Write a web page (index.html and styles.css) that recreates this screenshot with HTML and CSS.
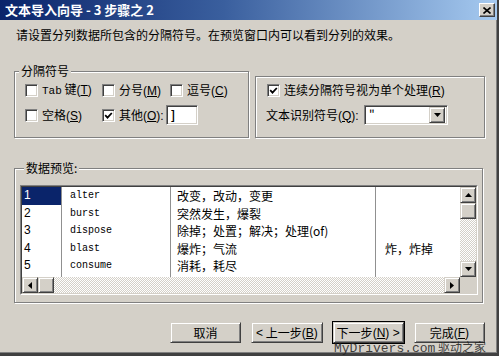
FILE: index.html
```html
<!DOCTYPE html>
<html lang="zh-CN">
  <head>
    <meta charset="UTF-8">
    <title>文本导入向导</title>
    <link rel="stylesheet" href="styles.css">
  </head>

  <body>
    <div class="window">
      <div class="titlebar">
        <span class="title">文本导入向导 - 3 步骤之 2</span>
        <span class="close">
          <svg width="8" height="7" viewBox="0 0 8 7"><path d="M0.5 0.5 L7.5 6.5 M7.5 0.5 L0.5 6.5" stroke="#000" stroke-width="1.6"/></svg>
        </span>
      </div>

      <div class="content">
        <p class="intro">请设置分列数据所包含的分隔符号。在预览窗口内可以看到分列的效果。</p>

        <div class="options">
          <fieldset class="group delimiters">
            <legend>分隔符号</legend>
            <div class="delim-grid">
              <label class="check"><span class="box"></span><span><span class="latin">Tab</span> 键<span class="acc">(<u>T</u>)</span></span></label>
              <label class="check"><span class="box"></span><span>分号<span class="acc">(<u>M</u>)</span></span></label>
              <label class="check"><span class="box"></span><span>逗号<span class="acc">(<u>C</u>)</span></span></label>
              <label class="check"><span class="box"></span><span>空格<span class="acc">(<u>S</u>)</span></span></label>
              <label class="check other">
                <span class="box"><svg width="9" height="9" viewBox="0 0 9 9"><path d="M1.2 4.2 L3.5 6.6 L7.8 2" fill="none" stroke="#000" stroke-width="1.8"/></svg></span>
                <span>其他<span class="acc">(<u>O</u>):</span></span>
                <span class="input">]</span>
              </label>
            </div>
          </fieldset>

          <fieldset class="group qualifier">
            <label class="check"><span class="box"><svg width="9" height="9" viewBox="0 0 9 9"><path d="M1.2 4.2 L3.5 6.6 L7.8 2" fill="none" stroke="#000" stroke-width="1.8"/></svg></span><span>连续分隔符号视为单个处理<span class="acc">(<u>R</u>)</span></span></label>
            <div class="qrow">
              <span class="qlabel">文本识别符号<span class="acc">(<u>Q</u>):</span></span>
              <span class="combo">
                <span class="combo-value">"</span>
                <span class="raised drop"><svg width="7" height="4" viewBox="0 0 7 4"><path d="M0 0 H7 L3.5 4 Z" fill="#000"/></svg></span>
              </span>
            </div>
          </fieldset>
        </div>

        <fieldset class="group preview">
          <legend>数据预览:</legend>
          <div class="listbox">
            <div class="listbox-inner">
              <div class="rows">
                <div class="row"><span class="num selected">1</span><span class="word">alter</span><span class="meaning">改变，改动，变更</span><span class="extra"></span></div>
                <div class="row"><span class="num">2</span><span class="word">burst</span><span class="meaning">突然发生，爆裂</span><span class="extra"></span></div>
                <div class="row"><span class="num">3</span><span class="word">dispose</span><span class="meaning">除掉；处置；解决；处理(of)</span><span class="extra"></span></div>
                <div class="row"><span class="num">4</span><span class="word">blast</span><span class="meaning">爆炸；气流</span><span class="extra">炸，炸掉</span></div>
                <div class="row"><span class="num">5</span><span class="word">consume</span><span class="meaning">消耗，耗尽</span><span class="extra"></span></div>
                <div class="row row-blank"><span class="num"></span><span class="word"></span><span class="meaning"></span><span class="extra"></span></div>
              </div>

              <div class="vscroll">
                <span class="raised sbtn"><svg width="7" height="4" viewBox="0 0 7 4"><path d="M0 4 H7 L3.5 0 Z" fill="#000"/></svg></span>
                <span class="raised sbtn"></span>
                <span class="track"></span>
                <span class="raised sbtn"><svg width="7" height="4" viewBox="0 0 7 4"><path d="M0 0 H7 L3.5 4 Z" fill="#000"/></svg></span>
              </div>

              <div class="hscroll">
                <span class="raised sbtn"><svg width="4" height="7" viewBox="0 0 4 7"><path d="M4 0 V7 L0 3.5 Z" fill="#000"/></svg></span>
                <span class="raised sbtn"></span>
                <span class="track"></span>
                <span class="raised sbtn"><svg width="4" height="7" viewBox="0 0 4 7"><path d="M0 0 V7 L4 3.5 Z" fill="#000"/></svg></span>
              </div>

              <div class="corner"></div>
            </div>
          </div>
        </fieldset>

        <div class="buttons">
          <button class="raised btn">取消</button>
          <button class="raised btn"><span class="acc">&lt;</span>&nbsp;上一步<span class="acc">(<u>B</u>)</span></button>
          <button class="raised btn default">下一步<span class="acc">(<u>N</u>) &gt;</span></button>
          <button class="raised btn">完成<span class="acc">(<u>F</u>)</span></button>
        </div>
      </div>

      <div class="watermark"><span class="wm-latin">MyDrivers.com</span> 驱动之家</div>
    </div>
  </body>
</html>
```

FILE: styles.css
```css
* {
  box-sizing: border-box;
}

body {
  margin: 0;
  font-family: "Noto Sans CJK SC", "Liberation Sans", sans-serif;
  font-size: 12px;
  line-height: 14px;
  color: #000;
  background-color: #d4d0c8;
}

u {
  text-decoration: underline;
}

/* Accelerator keys and other Latin bits next to CJK text */
.acc {
  font-family: "Liberation Sans", sans-serif;
  font-size: 12px;
}

.window {
  position: relative;
  width: 499px;
  height: 356px;
  background-color: #d4d0c8;
  border-right: 2px solid #404040;
  border-bottom: 3px solid #404040;
  box-shadow: inset -1px -1px #808080;
}

/* Title bar */
.titlebar {
  height: 20px;
  display: flex;
  align-items: center;
  justify-content: space-between;
  padding: 0 2px 0 5px;
  background: linear-gradient(to right, #0a246a, #3a5f9e 45%, #a6caf0);
  color: #fff;
  font-weight: bold;
  font-size: 13px;
}

.close {
  width: 16px;
  height: 14px;
  display: flex;
  align-items: center;
  justify-content: center;
  background-color: #d4d0c8;
  border: 1px solid;
  border-color: #fff #404040 #404040 #fff;
  box-shadow: inset -1px -1px #808080;
}

/* Shared 3D styles */
.raised {
  background-color: #d4d0c8;
  border: 1px solid;
  border-color: #d4d0c8 #404040 #404040 #d4d0c8;
  box-shadow: inset 1px 1px #fff, inset -1px -1px #808080;
}

.content {
  padding: 0 12px 0 14px;
}

.intro {
  margin: 8px 0 0 2px;
}

.options {
  display: flex;
  align-items: flex-end;
  gap: 6px;
  margin-top: 22px;
}

.group {
  margin: 0;
  padding: 0;
  min-width: 0;
  border: 1px solid #808080;
  box-shadow: inset 1px 1px #fff, 1px 1px #fff;
}

.group legend {
  margin-left: 4px;
  padding: 0 2px;
  background-color: #d4d0c8;
}

.delimiters {
  width: 235px;
  height: 74px;
}

.delim-grid {
  display: grid;
  grid-template-columns: 77px 68px auto;
  grid-auto-rows: 20px;
  row-gap: 5px;
  padding: 2px 0 0 10px;
}

.check {
  display: flex;
  align-items: center;
  gap: 4px;
  white-space: nowrap;
}

.other {
  grid-column: span 2;
}

.latin {
  font-family: "Liberation Mono", monospace;
  font-size: 11px;
}

.box {
  width: 13px;
  height: 13px;
  flex-shrink: 0;
  display: flex;
  align-items: center;
  justify-content: center;
  background-color: #fff;
  border: 1px solid;
  border-color: #808080 #fff #fff #808080;
  box-shadow: inset 1px 1px #404040, inset -1px -1px #d4d0c8;
}

.input {
  width: 32px;
  height: 20px;
  margin-left: -2px;
  padding: 2px 0 0 4px;
  background-color: #fff;
  border: 1px solid;
  border-color: #808080 #fff #fff #808080;
  box-shadow: inset 1px 1px #404040, inset -1px -1px #d4d0c8;
  font-weight: bold;
}

.qualifier {
  width: 230px;
  height: 62px;
  padding: 3px 0 0 11px;
  display: flex;
  flex-direction: column;
  gap: 5px;
}

.qualifier .check {
  height: 20px;
}

.qrow {
  display: flex;
  align-items: center;
  height: 20px;
}

.qlabel {
  width: 98px;
  margin-left: -1px;
}

.combo {
  width: 84px;
  height: 20px;
  display: flex;
  align-items: center;
  justify-content: space-between;
  padding: 0 2px 0 4px;
  background-color: #fff;
  border: 1px solid;
  border-color: #808080 #fff #fff #808080;
  box-shadow: inset 1px 1px #404040, inset -1px -1px #d4d0c8;
}

.drop {
  width: 16px;
  height: 16px;
  display: flex;
  align-items: center;
  justify-content: center;
}

/* Data preview */
.preview {
  width: 469px;
  height: 142px;
  margin-top: 23px;
  padding: 10px 0 0 5px;
}

.listbox {
  width: 458px;
  height: 110px;
  border: 1px solid;
  border-color: #808080 #fff #fff #808080;
}

.listbox-inner {
  width: 456px;
  height: 108px;
  display: grid;
  grid-template-columns: 438px 16px;
  grid-template-rows: 90px 16px;
  background-color: #fff;
  border: 1px solid;
  border-color: #404040 #d4d0c8 #d4d0c8 #404040;
}

.rows {
  overflow: hidden;
}

.row {
  display: grid;
  grid-template-columns: 40px 109px 205px 1fr;
  height: 17.5px;
  line-height: 17.5px;
  white-space: nowrap;
}

.row span {
  border-right: 1px solid #909090;
}

.row .extra {
  border-right: none;
  padding-left: 9px;
}

.num {
  padding-left: 2px;
  font-family: "Liberation Sans", sans-serif;
  font-size: 12px;
}

.num.selected {
  background-color: #0a246a;
  color: #fff;
}

.word {
  padding-left: 8px;
  font-family: "Liberation Mono", monospace;
  font-size: 10px;
}

.meaning {
  padding-left: 6px;
}

.vscroll,
.hscroll {
  display: flex;
  background-color: #e8e6e1;
  background-image: repeating-conic-gradient(#fff 0 25%, #d4d0c8 0 50%);
  background-size: 2px 2px;
}

.vscroll {
  flex-direction: column;
}

.track {
  flex: 1;
}

.sbtn {
  width: 16px;
  height: 16px;
  flex-shrink: 0;
  display: flex;
  align-items: center;
  justify-content: center;
}

.corner {
  background-color: #d4d0c8;
}

/* Buttons */
.buttons {
  display: flex;
  gap: 10px;
  margin: 19px 0 0 156px;
}

.btn {
  width: 72px;
  height: 21px;
  padding: 0;
  font-family: inherit;
  font-size: 12px;
  color: #000;
  display: flex;
  align-items: center;
  justify-content: center;
}

.btn.default {
  outline: 1px solid #000;
}

.watermark {
  position: absolute;
  left: 334px;
  top: 340px;
  line-height: 13px;
  color: rgba(30, 30, 30, 0.85);
  font-size: 12px;
  white-space: nowrap;
}

.wm-latin {
  font-family: "Liberation Mono", monospace;
  font-size: 13px;
}
```
